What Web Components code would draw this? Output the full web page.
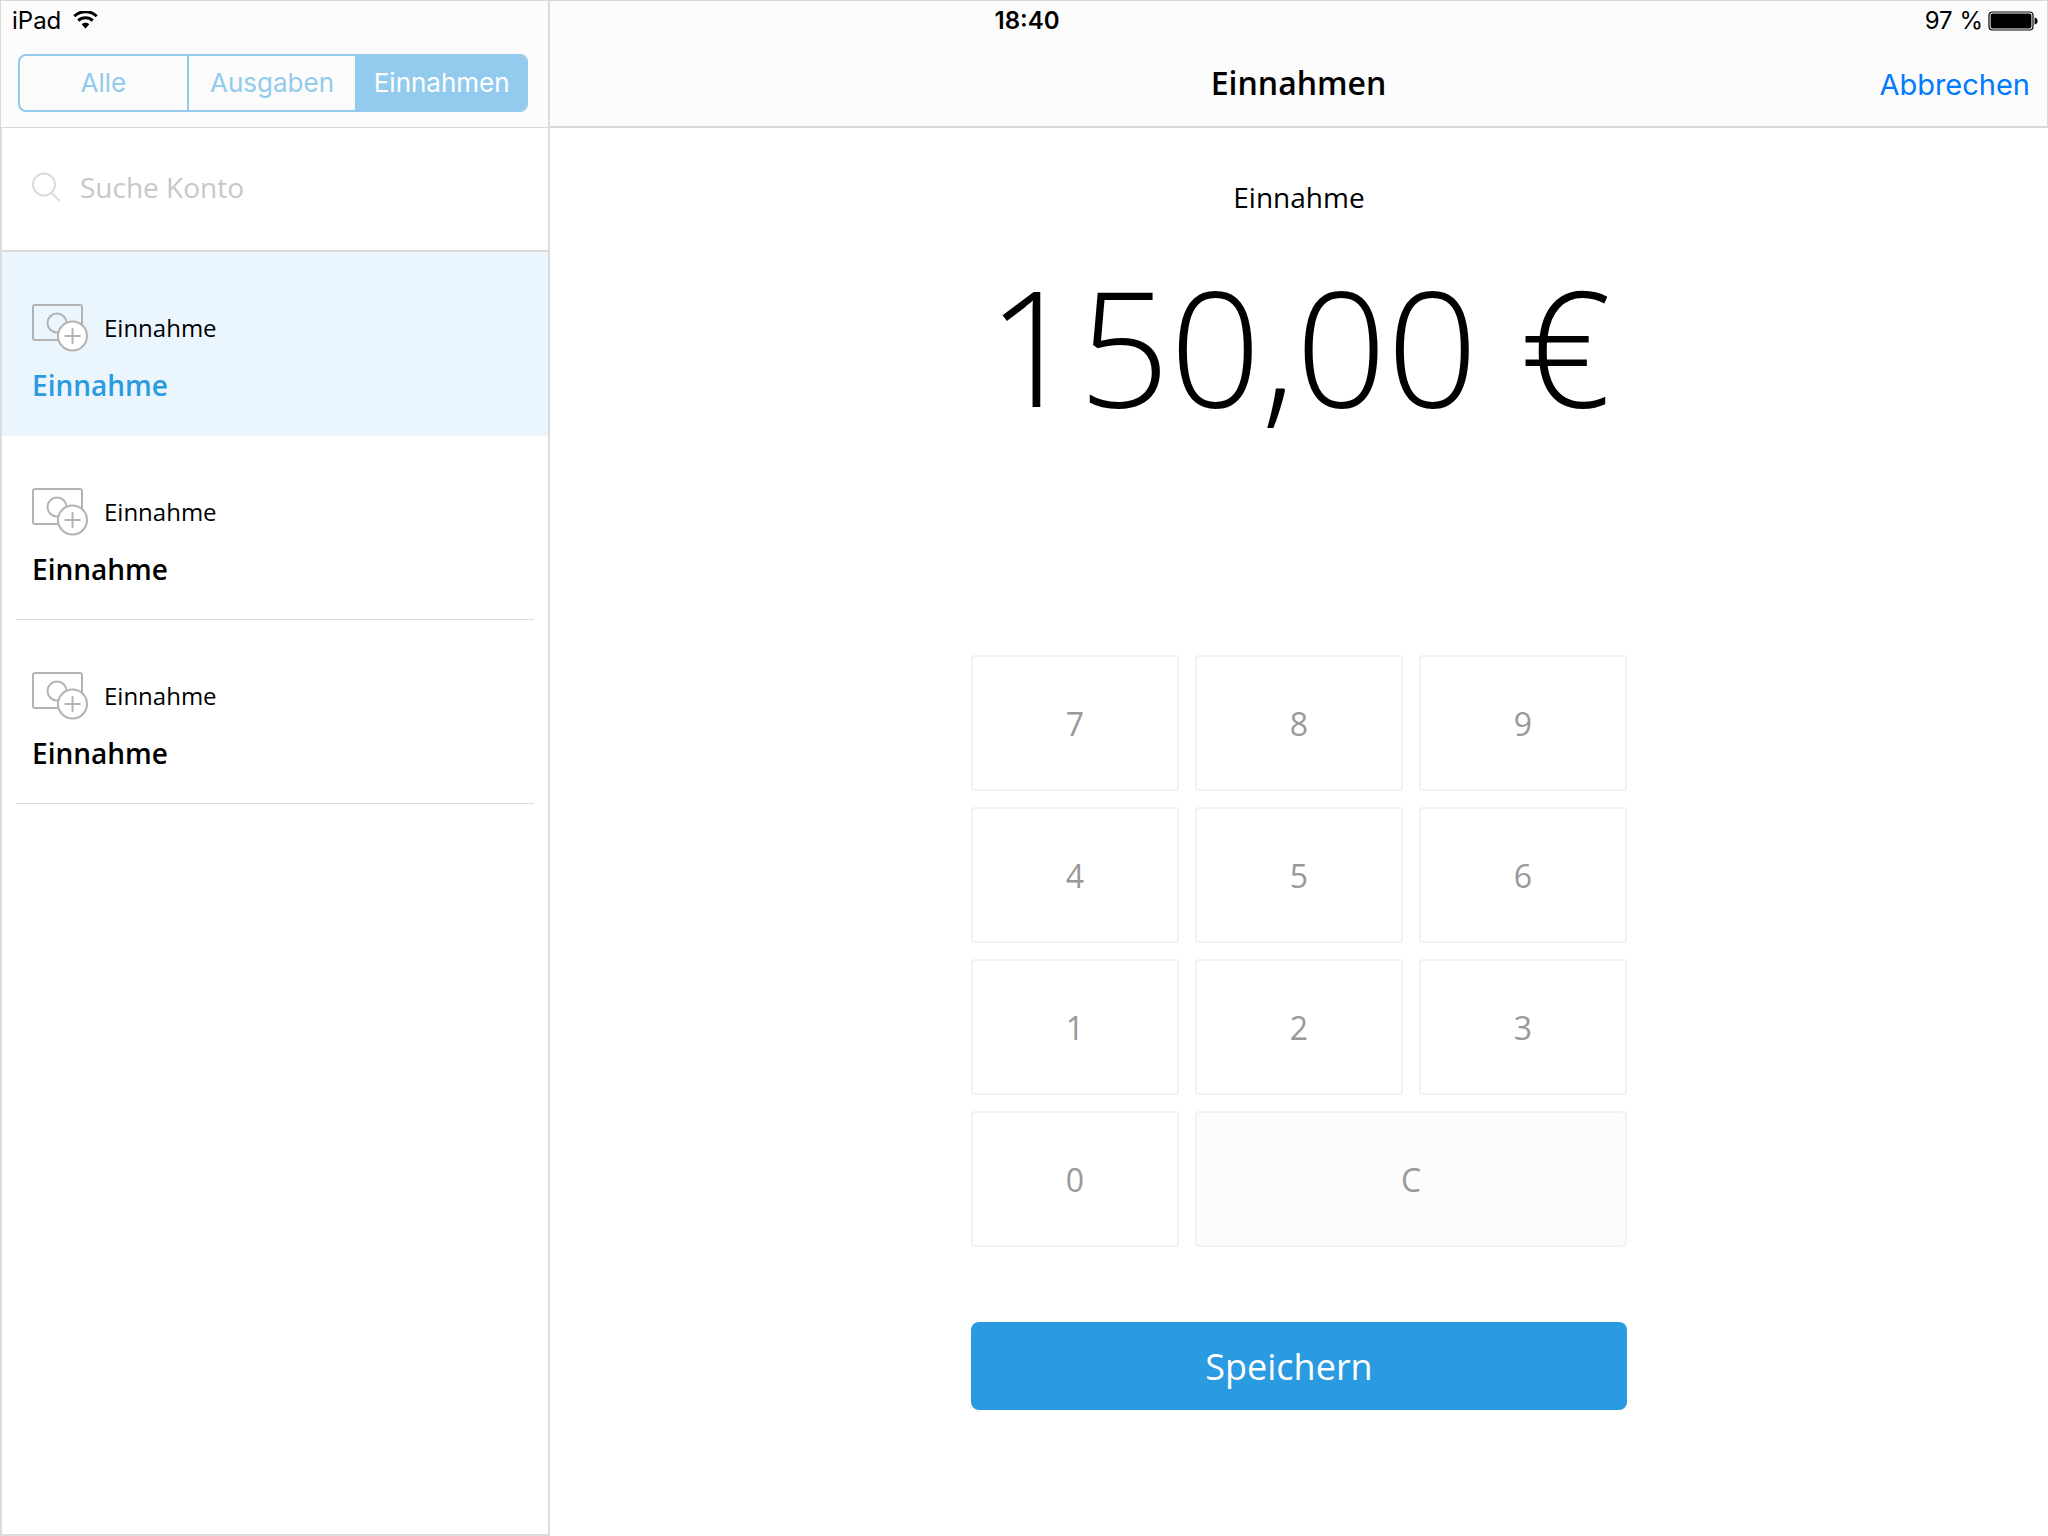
<!DOCTYPE html>
<html lang="de">
<head>
<meta charset="utf-8">
<meta name="viewport" content="width=device-width, initial-scale=1">
<title>Einnahmen</title>
<style>
  html, body { margin: 0; height: 100%; }
  body { font-family: "Open Sans", "Noto Sans", sans-serif; color: #000; background: #fff; }
</style>
</head>
<body>
<cash-app></cash-app>

<script>
const define = (name, html, setup) => {
  const template = document.createElement('template');
  template.innerHTML = html;
  customElements.define(name, class extends HTMLElement {
    constructor() {
      super();
      this.attachShadow({ mode: 'open' }).append(template.content.cloneNode(true));
    }
    connectedCallback() { if (setup) setup(this, this.shadowRoot); }
  });
};

define('status-bar', `
  <style>
    :host { display: grid; grid-template-columns: 1fr auto 1fr; align-items: center; height: 42px;
      box-sizing: border-box; padding: 0 10px 0 12px; font: 24px/42px Inter, sans-serif; }
    div { display: flex; align-items: center; gap: 12px; }
    .right { justify-content: flex-end; gap: 5px; }
    b { font-weight: 600; padding-left: 4px; }
    svg { display: block; }
  </style>
  <div><span>iPad</span>
    <svg width="25" height="20" viewBox="0 0 25 20" fill="none" stroke="#000" stroke-width="3" aria-hidden="true">
      <path d="M1.300 5.200a16 16 0 0 1 22.400 0"/><path d="M5.300 9.600a10.400 10.400 0 0 1 14.400 0"/>
      <path d="M12.500 17.400 8.700 13.300a5.600 5.600 0 0 1 7.600 0z" fill="#000" stroke="none"/>
    </svg>
  </div>
  <b>18:40</b>
  <div class="right"><span>97 %</span>
    <svg width="50" height="20" viewBox="0 0 50 20" aria-hidden="true">
      <rect x="1" y="1" width="44" height="18" rx="3.5" fill="none" stroke="#000" stroke-width="1.2"/>
      <rect x="2.6" y="2.6" width="40.8" height="14.8" rx="2"/>
      <path d="M46.600 6.600q3 .6 3 3.400t-3 3.400z"/>
    </svg>
  </div>`);

define('segmented-control', `
  <style>
    :host { display: grid; grid-auto-flow: column; grid-auto-columns: 1fr; height: 58px; box-sizing: border-box;
      border: 2px solid #92cbed; border-radius: 8px; overflow: hidden; }
  </style>
  <slot></slot>`);

define('segment-button', `
  <style>
    :host { display: flex; border-right: 2px solid #92cbed; }
    :host(:last-child) { border-right: 0; }
    button { flex: 1; border: 0; padding: 0; background: none; color: #92cbed; font: 26px/54px Inter, sans-serif; }
    :host([selected]) button { background: #92cbed; color: #fff; }
  </style>
  <button type="button"><slot></slot></button>`,
  (host, root) => root.querySelector('button').setAttribute('aria-pressed', host.hasAttribute('selected')));

define('account-search', `
  <style>
    :host { display: flex; align-items: center; gap: 19px; height: 124px; box-sizing: border-box; padding: 0 30px 4px;
      border-bottom: 2px solid #d9dbde; }
    label { display: block; }
    svg { display: block; }
    input { flex: 1; min-width: 0; border: 0; padding: 0; outline: 0; background: none; color: #000; font: inherit;
      font-size: 28px; line-height: 40px; height: 40px; }
    input::placeholder { color: #c7c7cb; opacity: 1; }
  </style>
  <label for="q" aria-label="Suche Konto">
    <svg width="29" height="30" viewBox="0 0 29 30" fill="none" stroke="#dcdcdc" stroke-width="2">
      <circle cx="12" cy="12.5" r="11"/><path d="m19.600 20.800 8.200 8.200"/>
    </svg>
  </label>
  <input id="q" type="text" placeholder="Suche Konto">`);

define('booking-row', `
  <style>
    :host { display: block; padding: 0 14px; }
    :host([selected]) { background: #ebf5fd; }
    button { display: flex; flex-direction: column; gap: 16px; width: 100%; height: 184px; box-sizing: border-box;
      border: 0; border-bottom: 1px solid #d9dbde; padding: 51px 16px 0; background: none; color: #000; font: inherit;
      text-align: left; }
    :host([selected]) button { border-bottom-color: transparent; }
    .kind { display: flex; align-items: center; gap: 15px; font-size: 24px; line-height: 50px; height: 50px; }
    .name { font-size: 28px; font-weight: 600; line-height: 32px; }
    :host([selected]) .name { color: #2a9be0; }
    svg { display: block; }
  </style>
  <button type="button">
    <span class="kind">
      <svg width="57" height="50" viewBox="0 0 57 50" fill="none" stroke="#b3b3b3" stroke-width="2" aria-hidden="true">
        <rect x="1" y="2" width="49" height="35" rx="2"/>
        <circle cx="25" cy="20" r="9.5"/>
        <circle cx="40.5" cy="33" r="14.5" fill="#fff"/>
        <path d="M40.500 25v16M32.500 33h16"/>
      </svg>
      <slot name="kind"></slot>
    </span>
    <span class="name"><slot></slot></span>
  </button>`);

define('account-pane', `
  <style>
    :host { display: flex; flex-direction: column; box-sizing: border-box; border-right: 2px solid #dbdbdb; }
    header { height: 128px; box-sizing: border-box; border: 1px solid #d9d9d9; border-right: 0; background: #fcfcfc;
      padding: 53px 20px 0 17px; }
    .list { flex: 1; border: solid #dbdbdb; border-width: 0 0 2px 2px; }
  </style>
  <header>
    <segmented-control role="group" aria-label="Filter">
      <segment-button>Alle</segment-button>
      <segment-button>Ausgaben</segment-button>
      <segment-button selected>Einnahmen</segment-button>
    </segmented-control>
  </header>
  <div class="list">
    <account-search></account-search>
    <booking-row selected><span slot="kind">Einnahme</span>Einnahme</booking-row>
    <booking-row><span slot="kind">Einnahme</span>Einnahme</booking-row>
    <booking-row><span slot="kind">Einnahme</span>Einnahme</booking-row>
  </div>`);

define('pad-key', `
  <style>
    :host { display: flex; }
    :host([wide]) { grid-column: span 2; }
    button { flex: 1; height: 136px; border: 2px solid #f2f2f2; border-radius: 4px; padding: 0; background: #fff;
      color: #999; font: inherit; font-size: 32px; }
    :host([wide]) button { background: #fcfcfc; }
  </style>
  <button type="button"><slot></slot></button>`);

define('number-pad', `
  <style>
    :host { display: grid; grid-template-columns: repeat(3, 1fr); gap: 16px; }
  </style>
  <pad-key>7</pad-key><pad-key>8</pad-key><pad-key>9</pad-key>
  <pad-key>4</pad-key><pad-key>5</pad-key><pad-key>6</pad-key>
  <pad-key>1</pad-key><pad-key>2</pad-key><pad-key>3</pad-key>
  <pad-key>0</pad-key><pad-key wide>C</pad-key>`);

define('save-button', `
  <style>
    :host { display: flex; }
    button { flex: 1; height: 88px; border: 0; border-radius: 8px; padding: 0 20px 0 0; background: #2a9be0; color: #fff;
      font: inherit; font-size: 36px; }
  </style>
  <button type="button"><slot></slot></button>`);

define('income-pane', `
  <style>
    :host { display: flex; flex-direction: column; }
    header { display: grid; grid-template-columns: 1fr auto 1fr; align-items: baseline; height: 128px; box-sizing: border-box;
      border: 1px solid #d9d9d9; border-left: 0; border-bottom-width: 2px; background: #fcfcfc; padding: 42px 17px 0; }
    h1 { grid-column: 2; margin: 0; font-size: 32px; font-weight: 600; line-height: 80px; }
    a { justify-self: end; color: #007aff; font: 29px/80px Inter, sans-serif; text-decoration: none; }
    main { display: flex; flex-direction: column; align-items: center; padding-top: 49px; }
    h2 { margin: 0; font-size: 28px; font-weight: 400; line-height: 40px; }
    output { font-size: 160px; font-weight: 300; line-height: 220px; margin: 18px 0 200px; white-space: nowrap; }
    .pad { width: 656px; max-width: 100%; display: flex; flex-direction: column; gap: 75px; }
  </style>
  <header><h1>Einnahmen</h1><a href="#">Abbrechen</a></header>
  <main>
    <h2>Einnahme</h2>
    <output>150,00 €</output>
    <div class="pad">
      <number-pad></number-pad>
      <save-button>Speichern</save-button>
    </div>
  </main>`);

define('cash-app', `
  <style>
    :host { display: grid; grid-template-columns: 550px 1fr; grid-template-rows: auto 1fr; min-height: 100vh; }
    account-pane { grid-area: 1 / 1 / 3 / 2; }
    income-pane { grid-area: 1 / 2 / 3 / 3; min-width: 0; }
    status-bar { grid-area: 1 / 1 / 2 / 3; z-index: 1; pointer-events: none; }
  </style>
  <account-pane></account-pane>
  <income-pane></income-pane>
  <status-bar></status-bar>`);
</script>
</body>
</html>
